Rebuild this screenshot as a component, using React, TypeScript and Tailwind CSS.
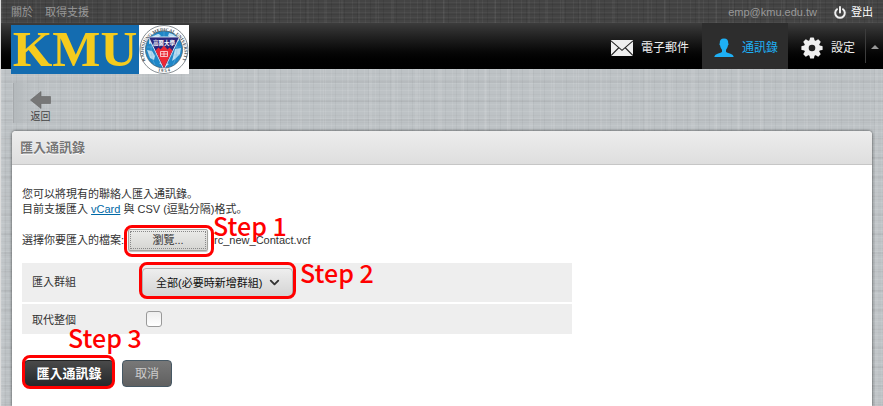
import { useRef, useState } from "react";
import { ChevronDown } from "lucide-react";

// woven background, periods are primes so the threads don't line up
const darkLinen =
  "bg-[repeating-linear-gradient(90deg,#ffffff0a_0_1px,transparent_1px_5px,#00000014_5px_6px,transparent_6px_13px),repeating-linear-gradient(90deg,#ffffff08_0_2px,transparent_2px_17px),repeating-linear-gradient(0deg,#ffffff0a_0_1px,transparent_1px_3px,#00000014_3px_4px,transparent_4px_5px)]";
const lightLinen =
  "bg-[repeating-linear-gradient(90deg,#ffffff12_0_1px,transparent_1px_4px,#00000008_4px_5px,transparent_5px_11px),repeating-linear-gradient(90deg,#ffffff12_0_3px,transparent_3px_23px),repeating-linear-gradient(0deg,#ffffff14_0_1px,transparent_1px_3px,#00000006_3px_4px,transparent_4px_7px),repeating-linear-gradient(0deg,#0000000a_0_2px,transparent_2px_19px)]";

function Seal() {
  return (
    <svg viewBox="0 0 50 49" className="h-[49px] w-[50px] bg-white" aria-label="Kaohsiung Medical University">
      <defs>
        <path id="ring-top" d="M6.6 35.5 A20.4 20.4 0 1 1 43.4 35.5" />
        <path id="ring-bottom" d="M10 41.5 A23 23 0 0 0 40 41.5" />
      </defs>
      <circle cx="25" cy="24.5" r="24" fill="#fff" stroke="#555e66" strokeWidth="0.7" />
      <circle cx="25" cy="24.5" r="18.6" fill="#1f86c7" stroke="#4b5a66" strokeWidth="0.7" />
      <path
        d="M10 16c3-5 7-7 10-7l2 2-5 2-3 5-4 1zM30 8c5 1 8 4 10 8l-4 1-3-4-4-2zM8 25l5 1 3 5-1 4-4-2zM36 24l6-1-1 6-5 5-3 2zM20 38l4-1 6 2-4 3z"
        fill="#b9dcf0"
      />
      <path d="M8 22h34M9 30h32M25 6v37M15 9c-4 9-4 21 1 31M35 9c4 9 4 21-1 31" stroke="#7dbbe0" strokeWidth="0.4" fill="none" />
      <path d="M9.500 12h31L25 44.500z" fill="#29277c" stroke="#fff" strokeWidth="0.8" />
      <path d="M16.500 25.500l3-3 2 2 3.500-4 3.500 4 2-2 3 3L25 43z" fill="#ec2936" />
      <path d="M21.500 26.500h7v5h-7zM21.500 29h7M25 26.500v5" stroke="#fff" strokeWidth="0.7" fill="none" />
      <text x="25" y="19.6" textAnchor="middle" fontSize="5.5" fontWeight="700" fill="#fff" fontFamily="Noto Sans CJK TC, sans-serif">
        高醫大學
      </text>
      <text fontSize="4.6" fontWeight="700" fill="#444d55" fontFamily="Liberation Serif, serif">
        <textPath href="#ring-top" startOffset="50%" textAnchor="middle">KAOHSIUNG MEDICAL UNIVERSITY</textPath>
      </text>
      <text fontSize="4.6" fontWeight="700" fill="#444d55" fontFamily="Liberation Serif, serif">
        <textPath href="#ring-bottom" startOffset="50%" textAnchor="middle">1 9 5 4</textPath>
      </text>
    </svg>
  );
}

function Logo() {
  return (
    <a href="#home" className="absolute top-0.5 left-2.5 z-10 flex h-[49px]">
      <span className="flex w-32 items-center justify-center bg-[#146cb0] font-['Liberation_Serif',serif] text-[51px] leading-[49px] font-bold text-[#f5cb1e]">
        KMU
      </span>
      <Seal />
    </a>
  );
}

function MailIcon() {
  return (
    <svg viewBox="0 0 22 16" className="h-4 w-[22px]">
      <path d="M0 0h22v16H0z" fill="#eee" />
      <path d="M0 .8l11 9.500 11-9.500M0 15.500l8-8M22 15.500l-8-8" fill="none" stroke="#222" strokeWidth="1.100" />
    </svg>
  );
}

function PersonIcon() {
  return (
    <svg viewBox="0 0 20 20" className="size-5">
      <path
        d="M10 .5c3.200 0 4.400 1.700 4.200 4.700.6.3.5 1.700-.3 2.300-.3 2-1.200 3.500-1.900 4.200v2.100c.6 1.200 3.300 1.400 5.500 2.400 1.400.6 2 1.500 2.200 2.800H.3c.2-1.300.8-2.200 2.200-2.800 2.200-1 4.900-1.200 5.500-2.400v-2.100c-.7-.7-1.600-2.200-1.900-4.200-.8-.6-.9-2-.3-2.300C5.600 2.200 6.800.5 10 .5z"
        fill="#1eb0f5"
      />
    </svg>
  );
}

function GearIcon() {
  return (
    <svg viewBox="0 0 22 22" className="size-[22px]">
      <g fill="#f0f0f0">
        <circle cx="11" cy="11" r="8" />
        {[0, 45, 90, 135, 180, 225, 270, 315].map((angle) => (
          <path key={angle} d="M8.200 4.500l.8-3.600q.1-.5.600-.5h2.800q.5 0 .6.500l.8 3.600z" transform={`rotate(${angle} 11 11)`} />
        ))}
      </g>
      <circle cx="11" cy="11" r="3.300" fill="#222" />
    </svg>
  );
}

function TopBar() {
  return (
    <div className={`flex h-[23px] items-center justify-between bg-[#444] pt-0.5 pr-2.5 pl-2.5 text-[#999] ${darkLinen}`}>
      <div className="flex gap-3">
        <a href="#about">關於</a>
        <a href="#support">取得支援</a>
      </div>
      <div className="flex items-center gap-4">
        <span>emp@kmu.edu.tw</span>
        <button className="flex items-center gap-1 text-white">
          <svg viewBox="0 0 14 14" className="size-3.5">
            <path d="M4 3.200a4.800 4.800 0 1 0 6 0M7 1v5.500" fill="none" stroke="#eee" strokeWidth="2" strokeLinecap="round" />
          </svg>
          登出
        </button>
      </div>
    </div>
  );
}

function Header() {
  return (
    <header className="relative flex h-[46px] justify-end bg-linear-to-b from-[#3c3c3c] to-black text-xs text-[#eee]">
      <Logo />
      <nav className="flex">
        <a href="#mail" className="flex items-center gap-2 px-[13px] pt-1">
          <MailIcon />
          電子郵件
        </a>
        <a href="#contacts" className="flex items-center gap-2 bg-[#2d2d2d] pt-1 pr-2.5 pl-3 text-[#1eb0f5]">
          <PersonIcon />
          通訊錄
        </a>
        <a href="#settings" className="flex items-center gap-2 pt-1 pr-2.5 pl-[13px]">
          <GearIcon />
          <span>設定</span>
        </a>
      </nav>
      <button aria-label="收合" className="my-1.5 flex w-[18px] items-center justify-center border-l border-[#3c3c3c]">
        <svg viewBox="0 0 8 4" className="mt-0.5 h-1 w-2">
          <path d="M4 0l4 4H0z" fill="#999" />
        </svg>
      </button>
    </header>
  );
}

function Toolbar() {
  return (
    <div className="flex h-[62px] items-start pt-3.5 pl-3">
      <button className="flex h-10 flex-col items-center border-l border-[#a5a9ac] bg-linear-to-r from-[#b4b9bc] to-transparent to-50% pt-2 pl-4 text-[10px] leading-4 text-[#444]">
        <svg viewBox="0 0 21 18" className="h-[18px] w-[21px] shrink-0">
          <path d="M.5 9L11 .5v5h9.500v7H11v5z" fill="#777" stroke="#666" strokeWidth="0.6" />
        </svg>
        返回
      </button>
    </div>
  );
}

function ImportForm() {
  const fileRef = useRef<HTMLInputElement>(null);
  const [fileName, setFileName] = useState("rc_new_Contact.vcf");

  return (
    <form className="px-2.5 pt-[22px] pb-4" onSubmit={(e) => e.preventDefault()}>
      <p>
        您可以將現有的聯絡人匯入通訊錄。
        <br />
        目前支援匯入{" "}
        <a href="#vcard" className="text-[#0069a6] underline">
          vCard
        </a>{" "}
        與 CSV (逗點分隔)格式。
      </p>

      {/* File picker */}
      <div className="mt-3 flex h-[22px] items-center">
        <label htmlFor="file">選擇你要匯入的檔案:</label>
        <input
          id="file"
          ref={fileRef}
          type="file"
          accept=".vcf,.csv"
          className="hidden"
          onChange={(e) => setFileName(e.target.files?.[0]?.name ?? "")}
        />
        <div className="relative ml-1 flex">
          <button
            type="button"
            onClick={() => fileRef.current?.click()}
            className="h-[22px] w-20 rounded-xs border border-[#a5a5a0] bg-linear-to-b from-[#ebebe9] to-[#d5d5d2] p-px shadow-[0_1px_1px_#00000040]"
          >
            <span className="block h-[18px] border border-dotted border-[#888] leading-4">瀏覽...</span>
          </button>
          <div className="pointer-events-none absolute -top-1 -right-1.5 -bottom-1.5 -left-1 rounded-lg border-3 border-[#f00]" />
          <Note className="-top-5 left-[85px]">Step 1</Note>
        </div>
        <span className="ml-1.5">{fileName}</span>
      </div>

      {/* Options */}
      <div className="mt-3 flex max-w-[550px] flex-col gap-0.5">
        <div className="flex h-[39px] items-center bg-[#eee] pl-2.5">
          <label htmlFor="group" className="w-[110px]">
            匯入群組
          </label>
          <div className="relative flex items-center">
            <select
              id="group"
              className="h-[29px] w-[151px] appearance-none rounded-sm border border-[#b2b2b2] bg-linear-to-b from-[#eee] to-[#d4d4d4] pt-0.5 pl-[13px] text-[#111] shadow-[0_1px_1px_#00000033]"
            >
              <option>全部(必要時新增群組)</option>
              <option>無</option>
            </select>
            <ChevronDown size={15} strokeWidth={3} className="pointer-events-none absolute right-[11px] text-[#333]" />
            <div className="pointer-events-none absolute -inset-x-[3px] -top-1.5 -bottom-0.5 rounded-lg border-3 border-[#f00]" />
            <Note className="-top-3 left-[158px]">Step 2</Note>
          </div>
        </div>
        <div className="relative flex h-[30px] items-center bg-[#eee] pl-2.5">
          <label htmlFor="replace" className="w-[114px] pt-0.5">
            取代整個
          </label>
          <input
            id="replace"
            type="checkbox"
            className="size-4 appearance-none rounded-[3px] border border-[#999] bg-linear-to-b from-[#eee] to-white checked:bg-[#333]"
          />
          <Note className="top-[17px] left-[46px]">Step 3</Note>
        </div>
      </div>

      {/* Actions */}
      <div className="mt-[26px] flex gap-2">
        <div className="relative ml-0.5 flex">
          <button
            type="submit"
            className="h-[27px] w-[90px] rounded-sm border border-[#222] bg-linear-to-b from-[#4a4a4a] to-[#25282b] text-[13px] font-bold text-white"
          >
            匯入通訊錄
          </button>
          <div className="pointer-events-none absolute -top-[5px] -right-px -bottom-0.5 -left-0.5 rounded-lg border-3 border-[#f00]" />
        </div>
        <button
          type="button"
          className="h-[27px] w-[50px] rounded-sm border border-[#465864] bg-linear-to-b from-[#787878] to-[#606060] text-xs text-[#ccc]"
        >
          取消
        </button>
      </div>
    </form>
  );
}

function Note({ className, children }: { className: string; children: React.ReactNode }) {
  return (
    <span
      className={`pointer-events-none absolute z-10 font-['Noto_Sans_CJK_JP',sans-serif] text-[25px] leading-8 font-medium whitespace-nowrap text-[#f00] ${className}`}
    >
      {children}
    </span>
  );
}

export default function App() {
  return (
    <div className="flex min-h-screen flex-col border-l border-[#ddd] font-['Liberation_Sans','Noto_Sans_CJK_JP',sans-serif] text-[11px] leading-[15px] text-[#333]">
      <TopBar />
      <Header />
      <main className={`flex flex-1 flex-col bg-[#bdc2c5] ${lightLinen}`}>
        <Toolbar />
        <section className="mx-[11px] flex-1 rounded-t bg-white shadow-[0_0_3px_#000000b3]">
          <h1 className="flex h-[34px] items-center rounded-t border-b border-[#c6c6c6] bg-linear-to-b from-[#ededed] to-[#dedede] pl-2 text-[13px] font-bold text-[#777] text-shadow-[0_1px_1px_#fff]">
            匯入通訊錄
          </h1>
          <ImportForm />
        </section>
      </main>
    </div>
  );
}
